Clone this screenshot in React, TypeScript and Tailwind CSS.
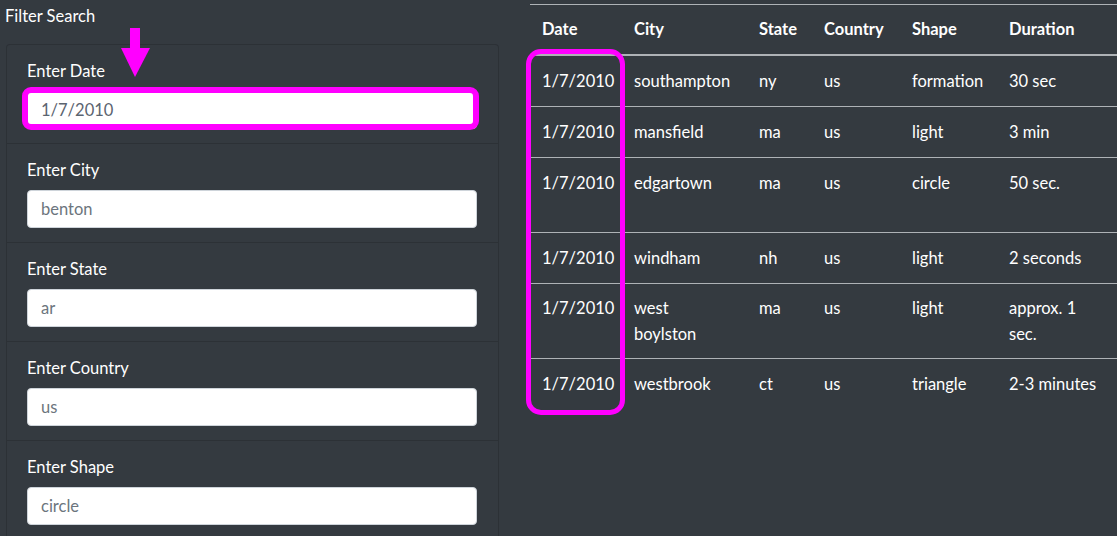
import React from "react";

const fields = [
  { label: "Enter Date", value: "1/7/2010", isValue: true },
  { label: "Enter City", value: "benton" },
  { label: "Enter State", value: "ar" },
  { label: "Enter Country", value: "us" },
  { label: "Enter Shape", value: "circle" },
];

const rows = [
  { date: "1/7/2010", city: "southampton", state: "ny", country: "us", shape: "formation", duration: "30 sec", tall: false, wrap: false },
  { date: "1/7/2010", city: "mansfield", state: "ma", country: "us", shape: "light", duration: "3 min", tall: false, wrap: false },
  { date: "1/7/2010", city: "edgartown", state: "ma", country: "us", shape: "circle", duration: "50 sec.", tall: true, wrap: false },
  { date: "1/7/2010", city: "windham", state: "nh", country: "us", shape: "light", duration: "2 seconds", tall: false, wrap: false },
  { date: "1/7/2010", city: "west boylston", state: "ma", country: "us", shape: "light", duration: "approx. 1 sec.", tall: false, wrap: true },
  { date: "1/7/2010", city: "westbrook", state: "ct", country: "us", shape: "triangle", duration: "2-3 minutes", tall: false, wrap: false },
];

export default function App() {
  return (
    <div
      className="w-[1117px] h-[536px] overflow-hidden bg-[#343a40] text-white flex text-[16.5px]"
      style={{ fontFamily: '"Lato", "Liberation Sans", sans-serif' }}
    >
      {/* Left column */}
      <div className="w-[499px] shrink-0 pl-[5px] relative">
        <div className="pt-[4px] leading-[24px] h-[44px]">Filter Search</div>
        <div className="ml-px w-[493px] border border-[#2c3136] rounded-t-[4px] border-b-0">
          {fields.map((f, i) => (
            <div
              key={f.label}
              className={`pl-5 pr-[21px] pt-[14px] pb-[14px] ${i > 0 ? "border-t border-[#2c3136]" : ""}`}
            >
              <div className="leading-[24px] mb-2">{f.label}</div>
              <div className="h-[38px] bg-white border border-[#ced4da] rounded-[4px] px-[13px] flex items-center">
                <span className={f.isValue ? "text-[#5b6470]" : "text-[#6c757d]"}>{f.value}</span>
              </div>
            </div>
          ))}
        </div>
        {/* magenta highlight around date input */}
        <div className="absolute left-[22px] top-[87px] w-[457px] h-[43px] border-[6px] border-[#ff00ff] rounded-[9px]" />
        {/* magenta arrow */}
        <svg className="absolute left-[118px] top-[27px]" width="34" height="52" viewBox="0 0 34 52">
          <rect x="12" y="1" width="10" height="21" fill="#ff00ff" />
          <polygon points="3,21 32,21 17,50" fill="#ff00ff" />
        </svg>
      </div>

      {/* Right column: table */}
      <div className="flex-1 pl-[31px] pt-[4px] relative">
        <table className="table-fixed border-collapse w-[600px] text-left">
          <colgroup>
            <col className="w-[92px]" />
            <col className="w-[125px]" />
            <col className="w-[65px]" />
            <col className="w-[88px]" />
            <col className="w-[97px]" />
            <col className="w-[133px]" />
          </colgroup>
          <thead>
            <tr className="border-t border-[#aeb2b6] border-b-2 border-b-[#aeb2b6]">
              {["Date", "City", "State", "Country", "Shape", "Duration"].map((h) => (
                <th key={h} className="px-3 pt-3 pb-3 leading-[25px] font-bold align-top">
                  {h}
                </th>
              ))}
            </tr>
          </thead>
          <tbody>
            {rows.map((r, i) => {
              const cell = `px-3 leading-[26px] align-top ${r.wrap ? "py-[11px]" : "py-3"}`;
              return (
                <tr key={i} className={i > 0 ? "border-t border-[#aeb2b6]" : ""}>
                  <td className={`${cell} ${r.tall ? "h-[75px]" : ""}`}>{r.date}</td>
                  <td className={cell}>
                    <span className="block w-[99px]">{r.city}</span>
                  </td>
                  <td className={cell}>{r.state}</td>
                  <td className={cell}>{r.country}</td>
                  <td className={cell}>{r.shape}</td>
                  <td className={`${cell} pr-[29px]`}>{r.duration}</td>
                </tr>
              );
            })}
          </tbody>
        </table>
        {/* magenta highlight around Date column */}
        <div className="absolute left-[27px] top-[49px] w-[99px] h-[366px] border-[5px] border-[#ff00ff] rounded-[15px]" />
      </div>
    </div>
  );
}
